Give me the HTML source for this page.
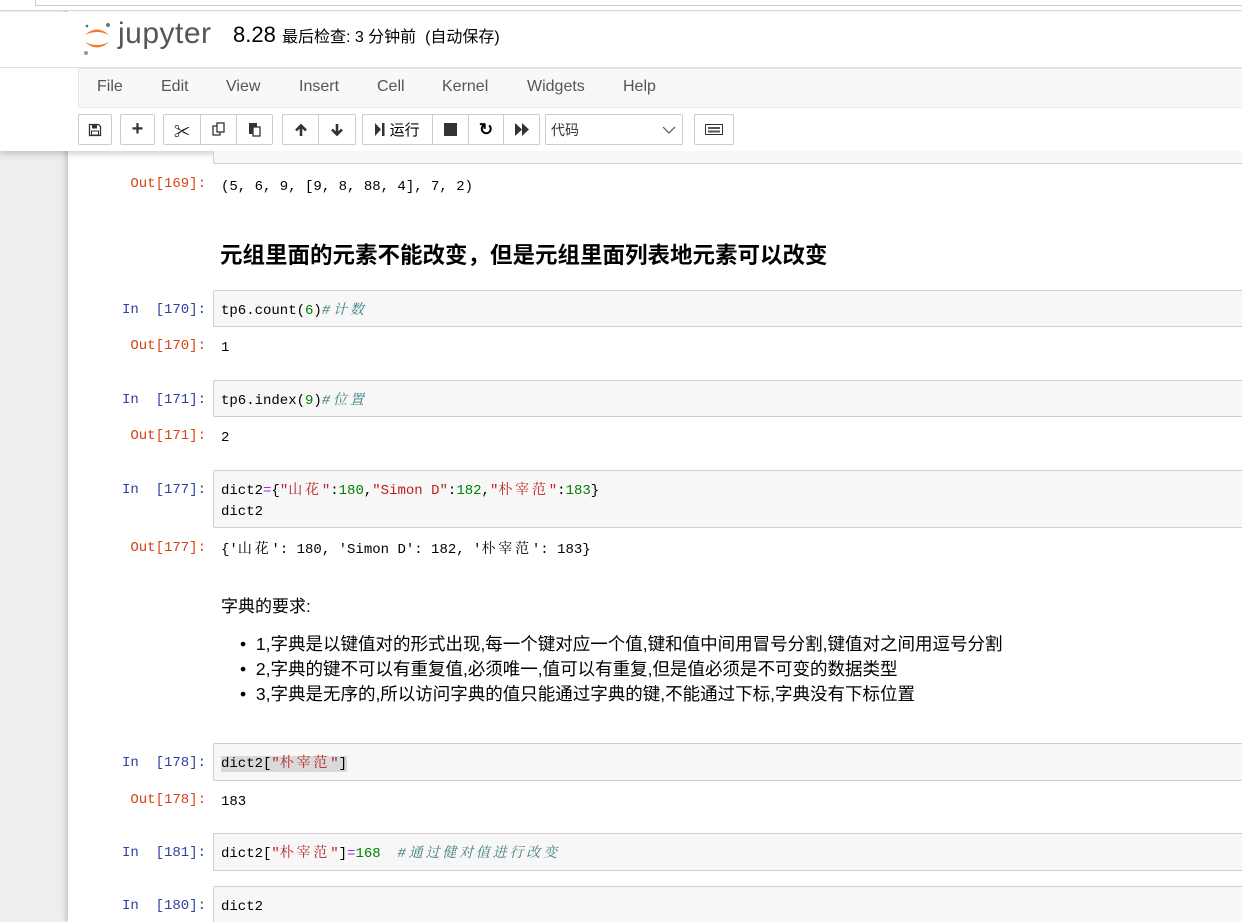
<!DOCTYPE html>
<html><head><meta charset="utf-8"><style>
*{margin:0;padding:0;box-sizing:border-box}
html,body{width:1242px;height:922px;overflow:hidden}
body{background:#eee;position:relative;font-family:"Liberation Sans","Noto Sans CJK SC",sans-serif}
.abs{position:absolute}
#nb{position:absolute;left:68px;top:0;width:1174px;height:922px;background:#fff;box-shadow:-2px 0 6px rgba(0,0,0,.2)}
#hdr{position:absolute;left:0;top:0;width:1242px;height:151px;background:#fff;box-shadow:0 3px 6px rgba(0,0,0,.18)}
.menu span{position:absolute;top:78px;font-size:16px;color:#555}
.btn{position:absolute;top:114px;height:31px;border:1px solid #ccc;border-radius:2px;background:#fff;display:flex;align-items:center;justify-content:center;color:#333;font-size:15px}
.grp{position:absolute;top:114px;height:31px;border:1px solid #ccc;border-radius:2px;background:#fff;display:flex}
.grp>div{height:29px;display:flex;align-items:center;justify-content:center;border-right:1px solid #ccc}
.grp>div:last-child{border-right:none}
.mono{font-family:"Liberation Mono","Noto Serif CJK SC",monospace;font-size:14px}
.k{letter-spacing:2.8px}
.pin{position:absolute;left:78px;width:128px;text-align:right;color:#303f9f}
.pout{position:absolute;left:78px;width:128px;text-align:right;color:#d84315}
.box{position:absolute;left:213px;width:1040px;background:#f7f7f7;border:1px solid #cfcfcf;border-radius:2px}
.code{position:absolute;left:221px;color:#000;line-height:21px;white-space:pre}
.s{color:#ba2121}.n{color:#008000}.c{color:#408080;font-style:italic}.o{color:#aa22ff}
.txt{position:absolute;left:221px;font-size:16px;color:#000}
</style></head><body>
<div id="nb"></div>
<div class="abs" style="left:0;top:0;width:1242px;height:11px;background:#fff;border-bottom:1px solid #ddd"></div>
<div class="abs" style="left:35px;top:0;width:1210px;height:6px;border:1px solid #ccc;border-top:none;background:#fff"></div>
<div id="hdr" style="top:12px;height:139px"></div>
<svg class="abs" style="left:82px;top:19px" width="32" height="38" viewBox="0 0 32 38">
<path d="M3 16 Q15 5 27 16 Q15 10 3 16Z" fill="#f37726"/>
<path d="M3 23 Q15 34 27 23 Q15 29 3 23Z" fill="#f37726"/>
<circle cx="26" cy="6" r="2" fill="#767677"/><circle cx="4" cy="34" r="2" fill="#989798"/><circle cx="5" cy="7" r="1.3" fill="#616262"/>
</svg>
<div class="abs" style="left:118px;top:17px;font-size:30px;color:#555;letter-spacing:0.5px">jupyter</div>
<div class="abs" style="left:233px;top:22px;font-size:22px;color:#000">8.28 <span style="font-size:16px">最后检查: 3 分钟前 &nbsp;(自动保存)</span></div>
<div class="abs" style="left:0;top:67px;width:1242px;height:1px;background:#e0e0e0"></div>
<div class="abs" style="left:78px;top:68px;width:1170px;height:40px;background:#f8f8f8;border:1px solid #e7e7e7"></div>
<div class="menu"><span style="left:97px">File</span><span style="left:161px">Edit</span><span style="left:226px">View</span><span style="left:299px">Insert</span><span style="left:377px">Cell</span><span style="left:442px">Kernel</span><span style="left:527px">Widgets</span><span style="left:623px">Help</span></div>
<div class="btn" style="left:78px;width:34px"><svg width="14" height="14" viewBox="0 0 14 14"><path d="M1.5 1.5h9l2 2v9h-11z" fill="none" stroke="#333" stroke-width="1.3"/><rect x="4" y="2" width="5" height="3.5" fill="#333"/><rect x="3.5" y="8" width="7" height="4" fill="none" stroke="#333"/></svg></div>
<div class="btn" style="left:120px;width:35px;font-size:20px;font-weight:bold">+</div>
<div class="grp" style="left:163px;width:110px"><div style="width:37px">✂</div><div style="width:36px"><svg width="14" height="15"><rect x="1" y="4" width="7" height="9" fill="none" stroke="#333" stroke-width="1.3"/><rect x="5" y="1" width="7" height="9" fill="#fff" stroke="#333" stroke-width="1.3"/></svg></div><div style="width:35px"><svg width="14" height="15"><rect x="1" y="1" width="8" height="11" fill="#333"/><rect x="5" y="5" width="7" height="9" fill="#fff" stroke="#333" stroke-width="1.3"/></svg></div></div>
<div class="grp" style="left:282px;width:74px"><div style="width:36px"><svg width="14" height="14" viewBox="0 0 14 14"><path d="M7 13V3M2 7.5L7 2.5L12 7.5" fill="none" stroke="#333" stroke-width="2.6"/></svg></div><div style="width:36px"><svg width="14" height="14" viewBox="0 0 14 14"><path d="M7 1v10M2 6.5L7 11.5L12 6.5" fill="none" stroke="#333" stroke-width="2.6"/></svg></div></div>
<div class="grp" style="left:362px;width:178px"><div style="width:70px;font-size:15px"><svg width="10" height="13"><path d="M0 0L6 6.5L0 13Z" fill="#333"/><rect x="7" y="0" width="2.5" height="13" fill="#333"/></svg>&nbsp;运行</div><div style="width:36px"><div style="width:13px;height:13px;background:#333"></div></div><div style="width:35px;font-weight:bold;font-size:17px">↻</div><div style="width:35px"><svg width="14" height="13"><path d="M0 0L7 6.5L0 13ZM7 0L14 6.5L7 13Z" fill="#333"/></svg></div></div>
<div class="btn" style="left:545px;width:138px;justify-content:space-between;padding:0 6px 0 5px;font-size:14px">代码<svg width="14" height="8"><path d="M1 1L7 7L13 1" fill="none" stroke="#555" stroke-width="1.2"/></svg></div>
<div class="btn" style="left:694px;width:40px"><svg width="18" height="11"><rect x=".5" y=".5" width="17" height="10" fill="#fff" stroke="#333"/><rect x="3" y="3" width="12" height="2" fill="#555"/><rect x="3" y="6.5" width="12" height="2" fill="#555"/></svg></div>
<div class="box" style="top:151px;height:13px;border-top:none"></div>
<div class="pout mono" style="top:176px">Out[169]:</div>
<div class="code mono" style="top:177px">(5, 6, 9, [9, 8, 88, 4], 7, 2)</div>
<div class="abs" style="left:220px;top:238px;font-size:22.5px;font-weight:bold;color:#000">元组里面的元素不能改变，但是元组里面列表地元素可以改变</div>
<div class="box" style="top:290px;height:37px"></div>
<div class="pin mono" style="top:302px">In&nbsp; [170]:</div>
<div class="code mono" style="top:301px">tp6.count(<span class="n">6</span>)<span class="c k">#计数</span></div>
<div class="pout mono" style="top:338px">Out[170]:</div>
<div class="code mono" style="top:338px">1</div>
<div class="box" style="top:380px;height:37px"></div>
<div class="pin mono" style="top:392px">In&nbsp; [171]:</div>
<div class="code mono" style="top:391px">tp6.index(<span class="n">9</span>)<span class="c k">#位置</span></div>
<div class="pout mono" style="top:428px">Out[171]:</div>
<div class="code mono" style="top:428px">2</div>
<div class="box" style="top:470px;height:58px"></div>
<div class="pin mono" style="top:482px">In&nbsp; [177]:</div>
<div class="code mono" style="top:481px">dict2<span class="o">=</span>{<span class="s">"<span class="k">山花</span>"</span>:<span class="n">180</span>,<span class="s">"Simon D"</span>:<span class="n">182</span>,<span class="s">"<span class="k">朴宰范</span>"</span>:<span class="n">183</span>}
dict2</div>
<div class="pout mono" style="top:540px">Out[177]:</div>
<div class="code mono" style="top:540px">{'<span class="k">山花</span>': 180, 'Simon D': 182, '<span class="k">朴宰范</span>': 183}</div>
<div class="txt" style="top:592px;font-size:17px">字典的要求:</div>
<div class="txt" style="left:240px;top:632px;line-height:25px;font-size:17.5px">• &nbsp;1,字典是以键值对的形式出现,每一个键对应一个值,键和值中间用冒号分割,键值对之间用逗号分割<br>• &nbsp;2,字典的键不可以有重复值,必须唯一,值可以有重复,但是值必须是不可变的数据类型<br>• &nbsp;3,字典是无序的,所以访问字典的值只能通过字典的键,不能通过下标,字典没有下标位置</div>
<div class="box" style="top:743px;height:38px"></div>
<div class="pin mono" style="top:755px">In&nbsp; [178]:</div>
<div class="code mono" style="top:754px"><span style="background:#d9d9d9">dict2[<span class="s">"<span class="k">朴宰范</span>"</span>]</span></div>
<div class="pout mono" style="top:792px">Out[178]:</div>
<div class="code mono" style="top:792px">183</div>
<div class="box" style="top:833px;height:38px"></div>
<div class="pin mono" style="top:845px">In&nbsp; [181]:</div>
<div class="code mono" style="top:844px">dict2[<span class="s">"<span class="k">朴宰范</span>"</span>]<span class="o">=</span><span class="n">168</span>  <span class="c k">#通过健对值进行改变</span></div>
<div class="box" style="top:886px;height:40px"></div>
<div class="pin mono" style="top:898px">In&nbsp; [180]:</div>
<div class="code mono" style="top:897px">dict2</div>
</body></html>
